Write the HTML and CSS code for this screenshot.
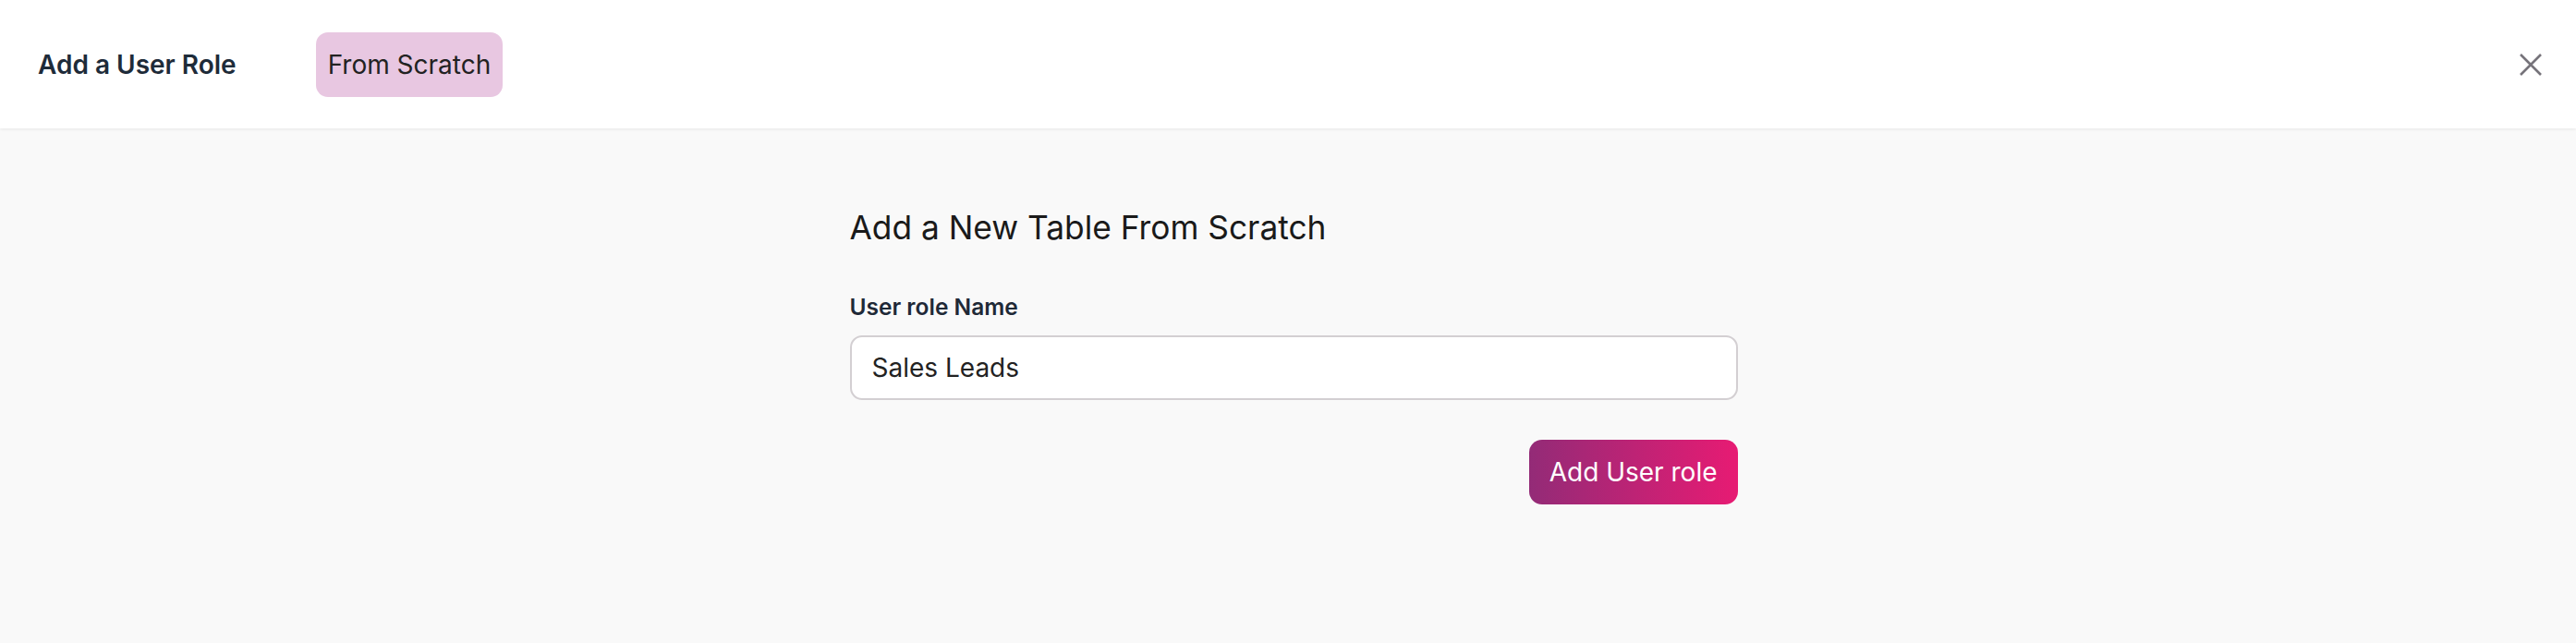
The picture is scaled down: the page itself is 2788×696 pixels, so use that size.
FILE: index.html
```html
<!DOCTYPE html>
<html>
<head>
<meta charset="utf-8">
<link rel="stylesheet" href="styles.css">
</head>
<body>
<header class="topbar">
  <div class="topbar-left">
    <h1 class="title">Add a User Role</h1>
    <span class="pill">From Scratch</span>
  </div>
  <button class="close" aria-label="Close">
    <svg width="26" height="24" viewBox="0 0 26 24"><path d="M2 1 L24 23 M24 1 L2 23" stroke="#76737a" stroke-width="2.6" fill="none"/></svg>
  </button>
</header>
<main class="main">
  <div class="form">
    <h2 class="heading">Add a New Table From Scratch</h2>
    <label class="label">User role Name</label>
    <div class="input">Sales Leads</div>
    <div class="actions">
      <button class="primary">Add User role</button>
    </div>
  </div>
</main>
</body>
</html>
```
FILE: styles.css
```css
html, body {
  margin: 0;
  padding: 0;
  height: 100%;
}
body {
  font-family: Inter, "Noto Sans", sans-serif;
  background: #f9f9f9;
}
.topbar {
  height: 139px;
  background: #fff;
  display: flex;
  align-items: center;
  justify-content: space-between;
  padding: 0 36px 0 41px;
  box-sizing: border-box;
  box-shadow: 0 1px 3px rgba(0,0,0,0.08);
  position: relative;
}
.topbar-left {
  display: flex;
  align-items: center;
  gap: 86px;
}
.title {
  margin: 0;
  font-size: 28px;
  font-weight: 600;
  color: #1e2b39;
}
.pill {
  display: inline-flex;
  align-items: center;
  height: 70px;
  padding: 0 13px;
  box-sizing: border-box;
  background: #e8c7e1;
  border-radius: 13px;
  font-size: 28px;
  color: #222;
}
.close {
  background: none;
  border: 0;
  padding: 0;
  display: flex;
  margin-right: 0;
}
.main {
  display: flex;
  justify-content: center;
  padding: 0 0 0 12px;
}
.form {
  width: 961px;
  padding-top: 86px;
}
.heading {
  margin: 0;
  font-size: 35.3px;
  font-weight: 400;
  color: #1a1a1a;
}
.label {
  display: block;
  margin-top: 49px;
  font-size: 24.5px;
  font-weight: 600;
  color: #1f2937;
}
.input {
  margin-top: 16px;
  height: 70px;
  box-sizing: border-box;
  border: 2px solid #d3cfd2;
  border-radius: 13px;
  background: #fff;
  padding: 0 22px;
  display: flex;
  align-items: center;
  font-size: 28px;
  color: #222;
}
.actions {
  display: flex;
  justify-content: flex-end;
  margin-top: 43px;
}
.primary {
  height: 70px;
  padding: 0 22px;
  border: 0;
  border-radius: 14px;
  background: linear-gradient(90deg, #932b77, #e71b73);
  color: #fff;
  font-family: inherit;
  font-size: 28px;
}
```
